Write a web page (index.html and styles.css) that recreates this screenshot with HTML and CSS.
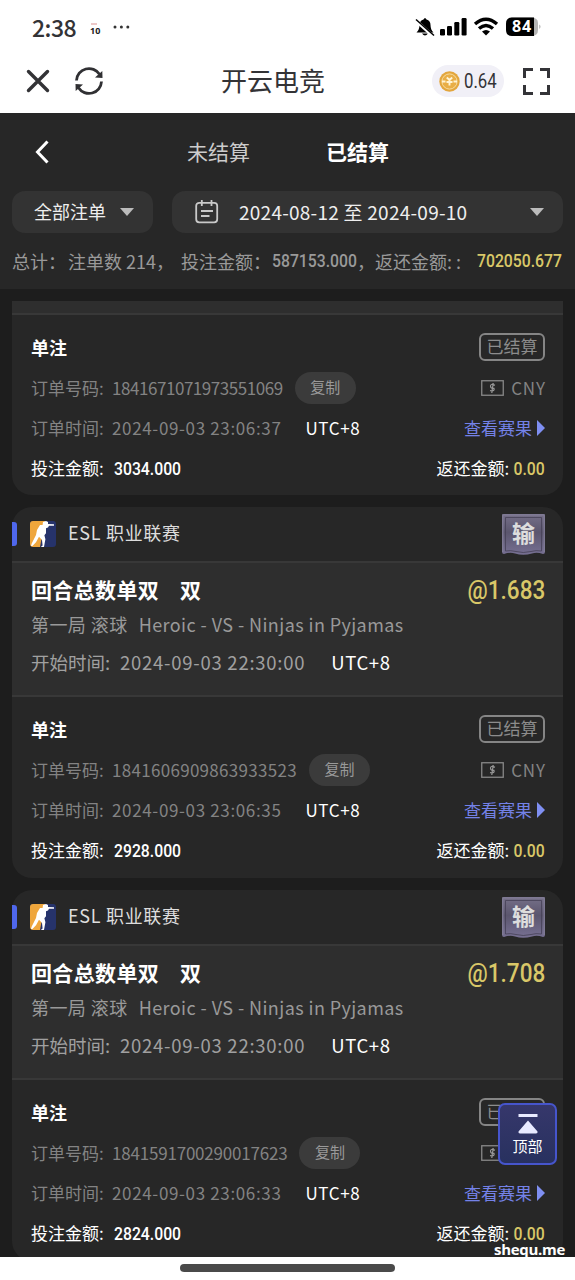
FILE: index.html
```html
<!DOCTYPE html>
<html lang="zh-CN">
<head>
<meta charset="utf-8">
<title>开云电竞</title>
<link rel="stylesheet" href="styles.css">
</head>
<body>
<svg class="defs" width="0" height="0">
  <defs>
    <linearGradient id="badgeFill" x1="0" y1="0" x2="0" y2="1"><stop offset="0" stop-color="#767089"/><stop offset=".45" stop-color="#5b566e"/><stop offset="1" stop-color="#777093"/></linearGradient>
    <symbol id="game" viewBox="0 0 26 26">
      <rect width="26" height="26" rx="3" fill="#26336b"/>
      <path d="M3 0H15L10 26H3Q0 26 0 23V3Q0 0 3 0Z" fill="#efa63c"/>
      <path d="M13 1l3-1 2 1v2l6 .2v1.6h-5l-1 1.6-2 .8v5l-1.6 2 1 4-1.4 7.8h-3.2l1.8-1.6-.6-5.4-3-3.2-3 5.4L2.4 25H1l.6-2.2L6 14l1-5 3-5h2.6z" fill="#fff"/>
    </symbol>
    <symbol id="badge" viewBox="0 0 43 42">
      <path d="M2 0H41Q43 0 43 2V38Q43 40 41 40Q35 38 30 39.500Q21 42 13 39.500Q8 38 2 40Q0 40 0 38V2Q0 0 2 0Z" fill="url(#badgeFill)"/>
      <path d="M3.500 37V3.500H39.500V37Q34 36 29 37.500Q21 39.500 14 37.500Q8 36 3.500 37Z" fill="none" stroke="#454055" stroke-width=".8"/>
      <path d="M.8 38V.8H42.200V38" fill="none" stroke="#837e98" stroke-width="1.200"/>
    </symbol>
    <symbol id="money" viewBox="0 0 23 16">
      <rect x=".75" y=".75" width="21.500" height="14.500" fill="none" stroke="#888" stroke-width="1.300"/>
      <path d="M14 5.200Q9.500 3.400 9.500 6T13 8.400Q14 11.400 9 10.600M12.200 3L10.800 13" fill="none" stroke="#999" stroke-width="1.200"/>
    </symbol>
  </defs>
</svg>
<div class="screen">
  <header class="top">
    <div class="status">
      <span class="clock">2:38</span>
      <span class="cal"><i></i>10</span>
      <svg class="dots" width="17" height="4" viewBox="0 0 17 4"><circle cx="2" cy="2" r="1.500"/><circle cx="8.400" cy="2" r="1.500"/><circle cx="14.800" cy="2" r="1.500"/></svg>
      <svg class="sig" width="128" height="20" viewBox="0 0 128 20">
        <path d="M1.500 15.500Q4.500 12.500 4.500 8Q4.500 3.500 8.500 2.500Q10 -.5 11.500 2.500Q15.500 3.500 15.500 8Q15.500 12.500 18.500 15.500ZM7 16.500H13Q10 20.500 7 16.500Z"/>
        <path d="M.8 3.500L18.500 19.500" stroke="#fff" stroke-width="3.200"/><path d="M1 2.500L19 18.500" stroke="#000" stroke-width="1.500"/>
        <rect x="25" y="12" width="5" height="6.500" rx="1.200"/><rect x="32" y="9" width="5" height="9.500" rx="1.200"/><rect x="39.300" y="5" width="5" height="13.500" rx="1.200"/><rect x="46.600" y="1" width="5" height="17.500" rx="1.200"/>
        <g fill="none" stroke="#000" stroke-width="3.400"><path d="M60 7Q71-2.500 82 7"/><path d="M64 11.600Q71 5.300 78 11.600"/></g><path d="M67 14.500Q71 11.500 75 14.500L71 18.500Z"/>
        <path d="M96 .5H116Q123 .5 123 6V13Q123 19 116 19H96Z" fill="#b5b5b5"/><path d="M97 .5H119V19H97Q91 19 91 13V6.500Q91 .5 97 .5Z"/><path d="M124.200 7.500Q127 9.700 124.200 12Z" fill="#b5b5b5"/>
        <text x="97" y="15.200" class="batt">84</text>
      </svg>
    </div>
    <div class="nav">
      <svg class="close" width="24" height="24" viewBox="0 0 24 24"><path d="M2.500 2.500L21.500 21.500M21.500 2.500L2.500 21.500" stroke="#333336" stroke-width="3.400" stroke-linecap="round"/></svg>
      <svg class="reload" width="28" height="28" viewBox="0 0 28 28"><g fill="none" stroke="#303033" stroke-width="2.800"><path d="M1.500 13.500A12.500 12.500 0 0 1 24.500 7.300"/><path d="M26.500 14.500A12.500 12.500 0 0 1 3.500 20.700"/></g><path d="M20 10.500L27.500 11L27.300 4ZM8 17.500L.5 17L.7 24Z" fill="#303033"/></svg>
      <h1>开云电竞</h1>
      <div class="balance"><svg width="21" height="21" viewBox="0 0 21 21"><circle cx="10.500" cy="10.500" r="10.200" fill="#e3a63d"/><circle cx="10.500" cy="10.500" r="7.600" fill="#e9ae46" stroke="#f7dca0" stroke-width="1"/><path d="M7.800 6.500L10.500 9L13.200 6.500M3 10.500H6.500M14.500 10.500H18M10.500 9V14.500M7.500 11H13.500" fill="none" stroke="#fff4d5" stroke-width="1.900"/></svg><span class="din">0.64</span></div>
      <svg class="full" width="27" height="27" viewBox="0 0 27 27"><path d="M1.500 10V1.500H10M17 1.500H25.500V10M25.500 17V25.500H17M10 25.500H1.500V17" fill="none" stroke="#343438" stroke-width="3"/></svg>
    </div>
  </header>

  <section class="panel">
    <div class="tabs">
      <svg class="back" width="14" height="24" viewBox="0 0 14 24"><path d="M12.500 1.500L2.500 12L12.500 22.500" fill="none" stroke="#fff" stroke-width="3"/></svg>
      <span class="tab">未结算</span><span class="tab on">已结算</span>
    </div>
    <div class="filters">
      <div class="select type"><span>全部注单</span><i class="caret"></i></div>
      <div class="select range">
        <svg width="24" height="24" viewBox="0 0 24 24"><g fill="none" stroke="#c9c9c9" stroke-width="1.800"><rect x="1.200" y="2.800" width="21" height="19.500" rx="3"/><path d="M6.800 0V6M16.500 0V6M6 11H18M6 16H14.500"/></g></svg>
        <span>2024-08-12 至 2024-09-10</span><i class="caret"></i>
      </div>
    </div>
    <div class="summary"><span class="s1">总计：</span><span class="s2">注单数 214，</span><span class="s3">投注金额：</span><span class="s4 din">587153.000</span><span class="s5">，</span><span class="s6">返还金额: :</span><span class="s7 din">702050.677</span></div>
  </section>

  <main class="list">
    <article class="card cut">
      <div class="strip"></div>
      <div class="order">
        <div class="row"><b>单注</b><span class="tag">已结算</span></div>
        <div class="row dim"><span class="label">订单号码:</span><span class="id ida">1841671071973551069</span><span class="copy">复制</span><span class="cur"><svg width="23" height="16"><use href="#money"/></svg><span>CNY</span></span></div>
        <div class="row dim"><span class="label">订单时间:</span><span class="time">2024-09-03 23:06:37</span><span class="utc">UTC+8</span><span class="result"><span>查看赛果</span><i></i></span></div>
        <div class="row"><span class="label amt">投注金额:</span><span class="din">3034.000</span><span class="back-amt"><span>返还金额:</span><em class="din">0.00</em></span></div>
      </div>
    </article>

    <article class="card">
      <div class="league"><i class="mark"></i><svg width="26" height="26"><use href="#game"/></svg><span>ESL 职业联赛</span><div class="badge"><svg width="43" height="42"><use href="#badge"/></svg><b>输</b></div></div>
      <div class="match">
        <div class="pick"><b>回合总数单双</b><b>双</b><span class="odds din">@1.683</span></div>
        <div class="teams"><span>第一局 滚球</span><span class="vs">Heroic - VS - Ninjas in Pyjamas</span></div>
        <div class="start"><span class="start-label">开始时间:</span><span class="start-time">2024-09-03 22:30:00</span><span class="utc">UTC+8</span></div>
      </div>
      <div class="order">
        <div class="row"><b>单注</b><span class="tag">已结算</span></div>
        <div class="row dim"><span class="label">订单号码:</span><span class="id idb">1841606909863933523</span><span class="copy">复制</span><span class="cur"><svg width="23" height="16"><use href="#money"/></svg><span>CNY</span></span></div>
        <div class="row dim"><span class="label">订单时间:</span><span class="time">2024-09-03 23:06:35</span><span class="utc">UTC+8</span><span class="result"><span>查看赛果</span><i></i></span></div>
        <div class="row"><span class="label amt">投注金额:</span><span class="din">2928.000</span><span class="back-amt"><span>返还金额:</span><em class="din">0.00</em></span></div>
      </div>
    </article>

    <article class="card">
      <div class="league"><i class="mark"></i><svg width="26" height="26"><use href="#game"/></svg><span>ESL 职业联赛</span><div class="badge"><svg width="43" height="42"><use href="#badge"/></svg><b>输</b></div></div>
      <div class="match">
        <div class="pick"><b>回合总数单双</b><b>双</b><span class="odds din">@1.708</span></div>
        <div class="teams"><span>第一局 滚球</span><span class="vs">Heroic - VS - Ninjas in Pyjamas</span></div>
        <div class="start"><span class="start-label">开始时间:</span><span class="start-time">2024-09-03 22:30:00</span><span class="utc">UTC+8</span></div>
      </div>
      <div class="order">
        <div class="row"><b>单注</b><span class="tag">已结算</span></div>
        <div class="row dim"><span class="label">订单号码:</span><span class="id idc">1841591700290017623</span><span class="copy">复制</span><span class="cur"><svg width="23" height="16"><use href="#money"/></svg><span>CNY</span></span></div>
        <div class="row dim"><span class="label">订单时间:</span><span class="time">2024-09-03 23:06:33</span><span class="utc">UTC+8</span><span class="result"><span>查看赛果</span><i></i></span></div>
        <div class="row"><span class="label amt">投注金额:</span><span class="din">2824.000</span><span class="back-amt"><span>返还金额:</span><em class="din">0.00</em></span></div>
      </div>
    </article>
  </main>

  <footer class="home"><i></i></footer>
  <div class="to-top"><svg width="20" height="20" viewBox="0 0 20 20"><path d="M.5 0H19.500V3H.5ZM10 6.500L19.500 17.500Q20 19.500 18 19.500H2Q0 19.500 .5 17.500Z" fill="#e8eaff"/></svg><span>顶部</span></div>
  <div class="watermark">shequ.me</div>
</div>
</body>
</html>
```
FILE: styles.css
```css
* { box-sizing: border-box; }
body { margin: 0; background: #fff; font-family: "Noto Sans CJK SC", sans-serif; color: #fff; }
.defs { position: absolute; }
svg { display: block; flex: none; }
i, em { font-style: normal; }
.screen { position: relative; width: 575px; height: 1280px; overflow: hidden; display: flex; flex-direction: column; background: #1d1d1d; white-space: nowrap; }
.din { font-family: Roboto, sans-serif; font-weight: 500; transform: scaleX(.875); transform-origin: left center; }

.top { height: 113px; flex: none; background: #fff; color: #333336; }
.status { height: 54px; display: flex; align-items: center; padding: 0 32px; }
.clock { width: 58px; font-size: 23px; font-weight: 500; line-height: 30px; letter-spacing: -.5px; padding-bottom: 1px; }
.cal { width: 23px; font: 700 9px/9px "Noto Sans", sans-serif; color: #222; padding-top: 3px; }
.cal i { display: block; width: 6px; height: 2px; margin: 0 0 1px 1px; background: #edc8c8; }
.dots { fill: #333; }
.sig { margin-left: auto; }
.batt { font: 700 16px "Open Sans", sans-serif; letter-spacing: .8px; fill: #fff; }
.nav { height: 54px; display: flex; align-items: center; padding: 0 25px 0 26px; }
.reload { margin-left: 25px; }
h1 { margin: 0 0 0 118px; font-size: 26px; font-weight: 400; line-height: 36px; padding-bottom: 2px; }
.balance { margin-left: auto; width: 72px; height: 32px; border-radius: 16px; background: #f1f0f7; display: flex; align-items: center; padding-left: 7px; gap: 4px; }
.balance .din { width: 32px; font-size: 20px; font-weight: 400; transform: scaleX(.84); }
.full { margin-left: 19px; }

.panel { height: 176px; flex: none; background: #272727; padding: 16px 12px 0; }
.tabs { height: 46px; display: flex; align-items: center; padding-left: 23px; font-size: 21px; }
.tab { margin-left: 138px; color: #ccc; padding-bottom: 2px; }
.tab.on { margin-left: 76px; font-weight: 700; color: #fff; }
.filters { display: flex; gap: 19px; margin-top: 16px; }
.select { height: 42px; border-radius: 13px; background: #333; display: flex; align-items: center; font-size: 18px; color: #eee; }
.select span { padding-bottom: 2px; }
.type { width: 141px; padding-left: 22px; gap: 14px; }
.range { flex: 1; padding: 0 19px 0 23px; }
.range span { margin-left: 20px; font-size: 19px; letter-spacing: .25px; }
.range .caret { margin-left: auto; }
.caret { border: 7px solid transparent; border-top: 8px solid #bbb; border-bottom: 0; }
.summary { height: 56px; display: flex; align-items: center; font-size: 18px; color: #999; }
.summary span { flex: none; padding-bottom: 1px; }
.s1 { width: 56px; } .s2 { width: 113px; } .s3 { width: 91px; } .s4 { width: 85px; } .s5 { width: 18px; } .s6 { width: 102px; } .s7 { width: 86px; }
.summary .s7 { color: #d9c768; }

.list { flex: 1; min-height: 0; overflow: hidden; padding: 12px 12px 0; display: flex; flex-direction: column; gap: 12px; }
.card { flex: none; width: 551px; background: #272727; border-radius: 20px; }
.cut { border-radius: 0 0 20px 20px; }
.strip { height: 12px; background: #2e2e2e; }
.order { height: 182px; border-top: 2px solid #383838; padding: 13px 18px 0 19px; }
.card + .card .order { height: 183px; }
.row { height: 40px; display: flex; align-items: center; font-size: 17px; }
.row > b { font-size: 18px; padding-bottom: 2px; }
.row > .din { font-size: 18px; }
.label, .id, .time, .utc, .cur span, .result span, .back-amt span { padding-bottom: 2px; }
.dim { color: #838383; }
.label { width: 81px; }
.amt { width: 83px; }
.tag { margin-left: auto; width: 66px; height: 28px; margin-bottom: 2px; border: 2px solid #858585; border-radius: 6px; color: #8c8c8c; line-height: 21px; text-align: center; }
.ida { letter-spacing: -.45px; } .idb { letter-spacing: .3px; } .idc { letter-spacing: -.2px; }
.copy { width: 61px; height: 32px; border-radius: 16px; margin-left: 12px; background: #3b3b3b; color: #999; font-size: 15px; line-height: 29px; text-align: center; }
.cur, .result, .back-amt { margin-left: auto; display: flex; align-items: center; }
.cur { gap: 7px; letter-spacing: .9px; margin-right: -1px; }
.time { letter-spacing: .65px; }
.utc { margin-left: 24px; color: #fff; letter-spacing: .6px; }
.result { color: #7482e8; gap: 5px; }
.result i { border: 8px solid transparent; border-left: 8px solid #7f8ff2; border-right: 0; }
.back-amt .din { font-size: 18px; color: #d9c768; transform-origin: right center; }

.league { height: 54px; display: flex; align-items: center; padding-right: 18px; font-size: 18px; color: #ddd; }
.mark { width: 5px; height: 24px; border-radius: 0 3px 3px 0; background: #4f67ec; margin-right: 13px; }
.league > span { margin-left: 12px; line-height: 26px; margin-bottom: 4px; letter-spacing: .7px; }
.badge { margin-left: auto; display: grid; padding-top: 1px; }
.badge svg, .badge b { grid-area: 1 / 1; }
.badge b { font-size: 23px; line-height: 36px; text-align: center; }
.match { height: 134px; border-top: 2px solid #383838; background: #2e2e2e; padding: 9px 18px 0 19px; }
.pick, .teams, .start { display: flex; align-items: center; }
.pick { height: 36px; font-size: 21px; gap: 21px; }
.pick b { padding-bottom: 3px; letter-spacing: .35px; }
.odds { margin-left: auto; font-size: 25px; color: #d9c768; transform: scaleX(.9); transform-origin: right center; }
.teams { height: 34px; font-size: 18px; color: #999; letter-spacing: .43px; }
.teams span, .start span { padding-bottom: 2px; }
.vs { margin-left: 11px; }
.start { height: 42px; font-size: 18.5px; color: #a0a0a0; }
.start-label { width: 89px; }
.start-time { letter-spacing: .75px; }
.start .utc { margin-left: 26px; }

.home { height: 23px; flex: none; background: #fff; padding-top: 7px; }
.home i { display: block; width: 215px; height: 8px; margin: 0 auto; border-radius: 4px; background: #4a4a4a; }
.to-top { position: absolute; left: 498px; top: 1103px; width: 59px; height: 62px; border: 2px solid #4655cc; border-radius: 7px; background: linear-gradient(#36376b, #28315f); display: flex; flex-direction: column; align-items: center; padding-top: 9px; font-size: 15px; line-height: 24px; }
.watermark { position: absolute; right: 10px; top: 1239px; font: 700 15px/20px "Open Sans", sans-serif; letter-spacing: -.3px; }
```
